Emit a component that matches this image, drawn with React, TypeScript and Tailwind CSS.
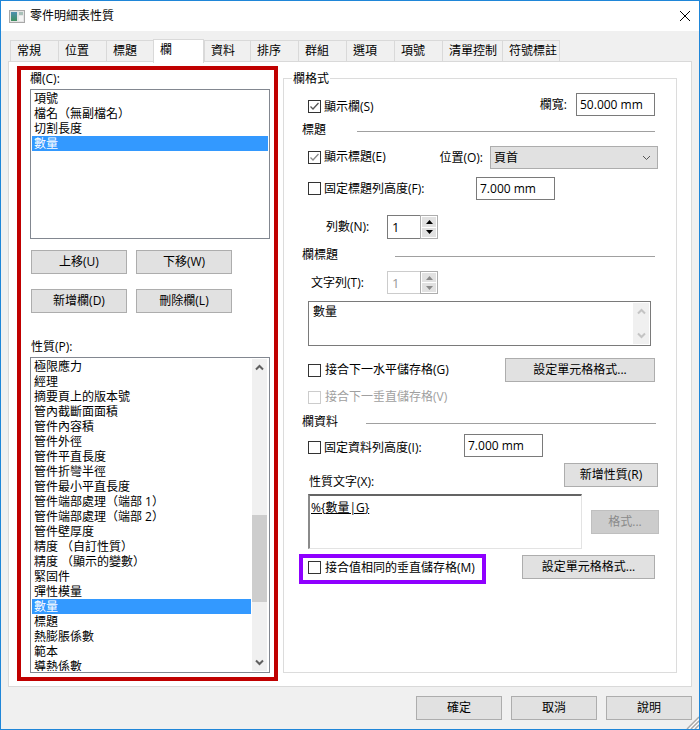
import React from 'react'

const COLUMNS = ['項號', '檔名（無副檔名）', '切割長度', '數量']
const PROPERTIES = [
	'極限應力',
	'經理',
	'摘要頁上的版本號',
	'管內截斷面面積',
	'管件內容積',
	'管件外徑',
	'管件平直長度',
	'管件折彎半徑',
	'管件最小平直長度',
	'管件端部處理（端部 1）',
	'管件端部處理（端部 2）',
	'管件壁厚度',
	'精度 （自訂性質）',
	'精度 （顯示的變數）',
	'緊固件',
	'彈性模量',
	'數量',
	'標題',
	'熱膨脹係數',
	'範本',
	'導熱係數',
]

const TABS = [
	{ label: '常規', width: 'w-[48px]' },
	{ label: '位置', width: 'w-[48px]' },
	{ label: '標題', width: 'w-[47px]' },
	{ label: '欄', width: 'w-[51px]', active: true },
	{ label: '資料', width: 'w-[46px]' },
	{ label: '排序', width: 'w-[48px]' },
	{ label: '群組', width: 'w-[48px]' },
	{ label: '選項', width: 'w-[48px]' },
	{ label: '項號', width: 'w-[48px]' },
	{ label: '清單控制', width: 'w-[60px]' },
	{ label: '符號標註', width: 'w-[58px]' },
]

const Btn: React.FunctionComponent<{ className?: string; children: React.ReactNode }> = ({
	className,
	children,
}) => (
	<div
		className={`h-[24px] shrink-0 flex items-center justify-center bg-[#e1e1e1] border border-[#adadad] ${className}`}
	>
		{children}
	</div>
)

const Check: React.FunctionComponent<{ checked?: boolean; disabled?: boolean; faint?: boolean }> = ({
	checked,
	disabled,
	faint,
}) => (
	<div
		className={`w-[13px] h-[13px] shrink-0 bg-white border ${
			disabled ? 'border-[#cccccc]' : 'border-[#333333]'
		}`}
	>
		{checked && (
			<svg width="11" height="11" viewBox="0 0 11 11">
				<path
					d="M1.5 5.5 L4 8 L9.5 2"
					fill="none"
					stroke={faint ? '#8a8a8a' : '#555555'}
					strokeWidth="1.3"
				/>
			</svg>
		)}
	</div>
)

const TextBox: React.FunctionComponent<{ value: string; className?: string }> = ({
	value,
	className,
}) => (
	<div
		className={`w-[79px] h-[23px] shrink-0 pl-[3px] flex items-center bg-white border border-[#7a7a7a] ${className}`}
	>
		{value}
	</div>
)

const Spinner: React.FunctionComponent<{ disabled?: boolean; className?: string }> = ({
	disabled,
	className,
}) => (
	<div className={`flex w-[51px] h-[23px] shrink-0 ${className}`}>
		<div
			className={`w-[33px] pl-[4px] flex items-center bg-white border border-r-0 text-[13px] ${
				disabled ? 'border-[#cccccc] text-[#999999]' : 'border-[#7a7a7a]'
			}`}
		>
			1
		</div>
		<div className="w-[18px] flex flex-col gap-px p-px bg-white border border-[#adadad]">
			{[0, 1].map(i => (
				<div key={i} className="flex-1 flex items-center justify-center bg-[#e1e1e1]">
					<svg width="7" height="4" viewBox="0 0 7 4">
						<path
							d={i === 0 ? 'M3.5 0 L7 4 L0 4 Z' : 'M0 0 L7 0 L3.5 4 Z'}
							fill={disabled ? '#8a8a8a' : '#000000'}
						/>
					</svg>
				</div>
			))}
		</div>
	</div>
)

const Chevron: React.FunctionComponent<{ up?: boolean; color?: string }> = ({
	up,
	color = '#606060',
}) => (
	<svg width="9" height="7" viewBox="0 0 9 7">
		<path
			d={up ? 'M1 5.5 L4.5 2 L8 5.5' : 'M1 1.5 L4.5 5 L8 1.5'}
			fill="none"
			stroke={color}
			strokeWidth="2"
		/>
	</svg>
)

const Section: React.FunctionComponent<{ title: string; line: string; className?: string }> = ({
	title,
	line,
	className,
}) => (
	<div className={`h-[14px] pl-[18px] pr-[21px] flex items-center ${className}`}>
		<span>{title}</span>
		<div className={`ml-auto mt-[3px] h-px bg-[#a0a0a0] ${line}`} />
	</div>
)

const ListRow: React.FunctionComponent<{ label: string; selected?: boolean }> = ({
	label,
	selected,
}) => (
	<div
		className={`h-[15px] shrink-0 pl-[2px] leading-[15px] whitespace-pre [text-spacing-trim:space-all] ${
			selected ? 'bg-[#3399ff] text-white' : ''
		}`}
	>
		{label}
	</div>
)

const App: React.FunctionComponent = () => {
	return (
		<div className="relative w-[700px] h-[730px] flex flex-col border border-[#1f86d8] bg-white text-[12px] leading-[14px] text-black [font-family:'Open_Sans','Noto_Sans_CJK_TC',sans-serif] overflow-hidden">
			{/* title bar */}
			<div className="h-[30px] shrink-0 flex items-center pl-[8px] pr-[8px]">
				<svg width="16" height="13" viewBox="0 0 16 13" className="mr-[5px]">
					<defs>
						<linearGradient id="pane" x1="0" y1="0" x2="0" y2="1">
							<stop offset="0" stopColor="#4f8fb0" />
							<stop offset="1" stopColor="#3f8f5f" />
						</linearGradient>
					</defs>
					<rect x="0.5" y="0.5" width="15" height="12" fill="#e4e4e4" stroke="#a8a8a8" />
					<rect x="2" y="2" width="6" height="9" fill="url(#pane)" />
					<rect x="10" y="2" width="4" height="3" fill="#a8c0b8" />
					<rect x="10" y="6" width="4" height="5" fill="#f4f4f4" />
				</svg>
				<span>零件明細表性質</span>
				<svg width="12" height="12" viewBox="0 0 12 12" className="ml-auto">
					<path d="M1 1 L11 11 M11 1 L1 11" stroke="#000000" strokeWidth="1" />
				</svg>
			</div>

			<div className="flex-1 flex flex-col bg-[#f0f0f0] pt-[10px] px-[7px]">
				{/* tabs */}
				<div className="h-[20px] shrink-0 pl-[2px] flex items-end">
					{TABS.map(tab => (
						<div
							key={tab.label}
							className={`shrink-0 pl-[6px] border border-[#d9d9d9] ${tab.width} ${
								tab.active
									? 'relative z-10 h-[24px] -mb-[2px] pt-[3px] bg-white border-b-0'
									: 'h-[21px] pt-[3px] border-b-0 border-r-0 last:border-r'
							}`}
						>
							{tab.label}
						</div>
					))}
				</div>

				{/* tab panel */}
				<div className="h-[626px] shrink-0 flex items-start bg-white border border-[#d9d9d9]">
					{/* red highlighted column */}
					<div className="ml-[8px] mt-[4px] w-[261px] h-[615px] shrink-0 pl-[9px] border-4 border-[#c00000]">
						<div className="h-[19px] leading-[18px]">欄(C):</div>
						<div className="w-[240px] h-[150px] p-px border border-[#828790]">
							{COLUMNS.map(label => (
								<ListRow key={label} label={label} selected={label === '數量'} />
							))}
						</div>
						<div className="mt-[11px] ml-px flex gap-[9px]">
							<Btn className="w-[96px]">上移(U)</Btn>
							<Btn className="w-[96px]">下移(W)</Btn>
						</div>
						<div className="mt-[15px] ml-px flex gap-[9px]">
							<Btn className="w-[96px]">新增欄(D)</Btn>
							<Btn className="w-[96px]">刪除欄(L)</Btn>
						</div>
						<div className="mt-[24px] ml-px h-[20px] leading-[20px]">性質(P):</div>
						<div className="w-[240px] h-[316px] p-px flex gap-px border border-[#828790]">
							<div className="w-[219px] flex flex-col overflow-hidden">
								{PROPERTIES.map(label => (
									<ListRow key={label} label={label} selected={label === '數量'} />
								))}
							</div>
							<div className="w-[15px] flex flex-col items-center bg-[#f0f0f0]">
								<div className="h-[17px] flex items-center">
									<Chevron up />
								</div>
								<div className="mt-[139px] w-full h-[87px] bg-[#cdcdcd]" />
								<div className="mt-auto h-[17px] flex items-center">
									<Chevron />
								</div>
							</div>
						</div>
					</div>

					{/* column format group */}
					<div className="ml-[5px] mt-[16px] w-[394px] h-[595px] shrink-0 bg-white border border-[#dcdcdc]">
						<div className="-mt-[7px] ml-[8px] w-fit px-px bg-white">欄格式</div>

						<div className="mt-[7px] h-[23px] pl-[24px] pr-[21px] flex items-center">
							<div className="mt-[4px] flex items-center gap-[3px]">
								<Check checked />
								<span>顯示欄(S)</span>
							</div>
							<span className="ml-auto mr-[9px]">欄寬:</span>
							<TextBox value="50.000 mm" />
						</div>

						<Section title="標題" line="w-[298px]" className="mt-[7px]" />

						<div className="mt-[9px] h-[23px] pl-[24px] pr-[18px] flex items-center">
							<div className="-mt-px flex items-center gap-[3px]">
								<Check checked faint />
								<span>顯示標題(E)</span>
							</div>
							<span className="ml-auto mr-[7px]">位置(O):</span>
							<div className="w-[168px] h-[23px] pl-[3px] pr-[6px] flex items-center justify-between bg-[#e1e1e1] border border-[#adadad]">
								<span>頁首</span>
								<svg width="9" height="6" viewBox="0 0 9 6">
									<path d="M1 1 L4.5 4.5 L8 1" fill="none" stroke="#555555" strokeWidth="1" />
								</svg>
							</div>
						</div>

						<div className="mt-[8px] h-[23px] pl-[24px] flex items-center">
							<Check />
							<span className="ml-[3px] w-[152px]">固定標題列高度(F):</span>
							<TextBox value="7.000 mm" />
						</div>

						<div className="mt-[15px] h-[24px] pl-[42px] flex items-center">
							<span className="w-[61px]">列數(N):</span>
							<Spinner className="h-[24px]" />
						</div>

						<Section title="欄標題" line="w-[260px]" className="mt-[9px]" />

						<div className="mt-[9px] h-[23px] pl-[27px] flex items-center">
							<span className="w-[76px]">文字列(T):</span>
							<Spinner disabled />
						</div>

						<div className="mt-[7px] ml-[24px] w-[343px] h-[45px] pl-[4px] pr-px py-px flex justify-between border border-[#7a7a7a]">
							<span className="mt-[2px]">數量</span>
							<div className="w-[16px] flex flex-col items-center justify-between py-[5px] bg-[#f0f0f0]">
								<Chevron up color="#c4c4c4" />
								<Chevron color="#c4c4c4" />
							</div>
						</div>

						<div className="mt-[12px] h-[24px] pl-[24px] pr-[21px] flex items-center">
							<Check />
							<span className="ml-[4px]">接合下一水平儲存格(G)</span>
							<Btn className="ml-auto w-[150px]">設定單元格格式...</Btn>
						</div>

						<div className="mt-[8px] h-[14px] pl-[24px] flex items-center text-[#a0a0a0]">
							<Check disabled />
							<span className="ml-[4px]">接合下一垂直儲存格(V)</span>
						</div>

						<Section title="欄資料" line="w-[290px]" className="mt-[11px] !pr-[20px]" />

						<div className="mt-[5px] h-[23px] pl-[24px] flex items-center">
							<div className="mt-[4px] flex items-center">
								<Check />
								<span className="ml-[3px] w-[140px]">固定資料列高度(I):</span>
							</div>
							<TextBox value="7.000 mm" />
						</div>

						<div className="mt-[6px] h-[24px] pl-[25px] pr-[18px] flex items-start">
							<span className="pt-[12px]">性質文字(X):</span>
							<Btn className="ml-auto w-[94px]">新增性質(R)</Btn>
						</div>

						<div className="mt-[7px] h-[55px] pl-[24px] flex items-start">
							<div className="w-[274px] h-[55px] pl-[1px] pt-[5px] bg-white border border-[#e3e3e3] border-t-2 border-l-2 border-t-[#646464] border-l-[#8a8a8a]">
								<span className="underline">%{'{'}數量|G{'}'}</span>
							</div>
							<Btn className="ml-[9px] mt-[16px] w-[68px] !bg-[#cccccc] !border-[#bfbfbf] text-[#8a8a8a]">
								格式...
							</Btn>
						</div>

						<div className="mt-[5px] h-[30px] pr-[21px] flex items-start">
							<div className="ml-[15px] w-[187px] h-[30px] pl-[5px] pt-[3px] flex items-start border-4 border-[#8f00ff]">
								<Check />
								<span className="ml-[4px]">接合值相同的垂直儲存格(M)</span>
							</div>
							<Btn className="ml-auto mt-px w-[133px]">設定單元格格式...</Btn>
						</div>
					</div>
				</div>

				{/* dialog buttons */}
				<div className="mt-[9px] flex justify-end gap-[9px]">
					<Btn className="w-[86px]">確定</Btn>
					<Btn className="w-[86px]">取消</Btn>
					<Btn className="w-[86px]">說明</Btn>
				</div>
			</div>

			{/* resize grip */}
			<svg width="13" height="13" viewBox="0 0 13 13" className="absolute right-0 bottom-0">
				<path
					d="M13 1 L1 13 M13 5 L5 13 M13 9 L9 13"
					stroke="#a8a8a8"
					strokeWidth="1.4"
					fill="none"
				/>
				<path d="M13 3 L3 13 M13 7 L7 13 M13 11 L11 13" stroke="#ffffff" strokeWidth="1" fill="none" />
			</svg>
		</div>
	)
}

export default App
